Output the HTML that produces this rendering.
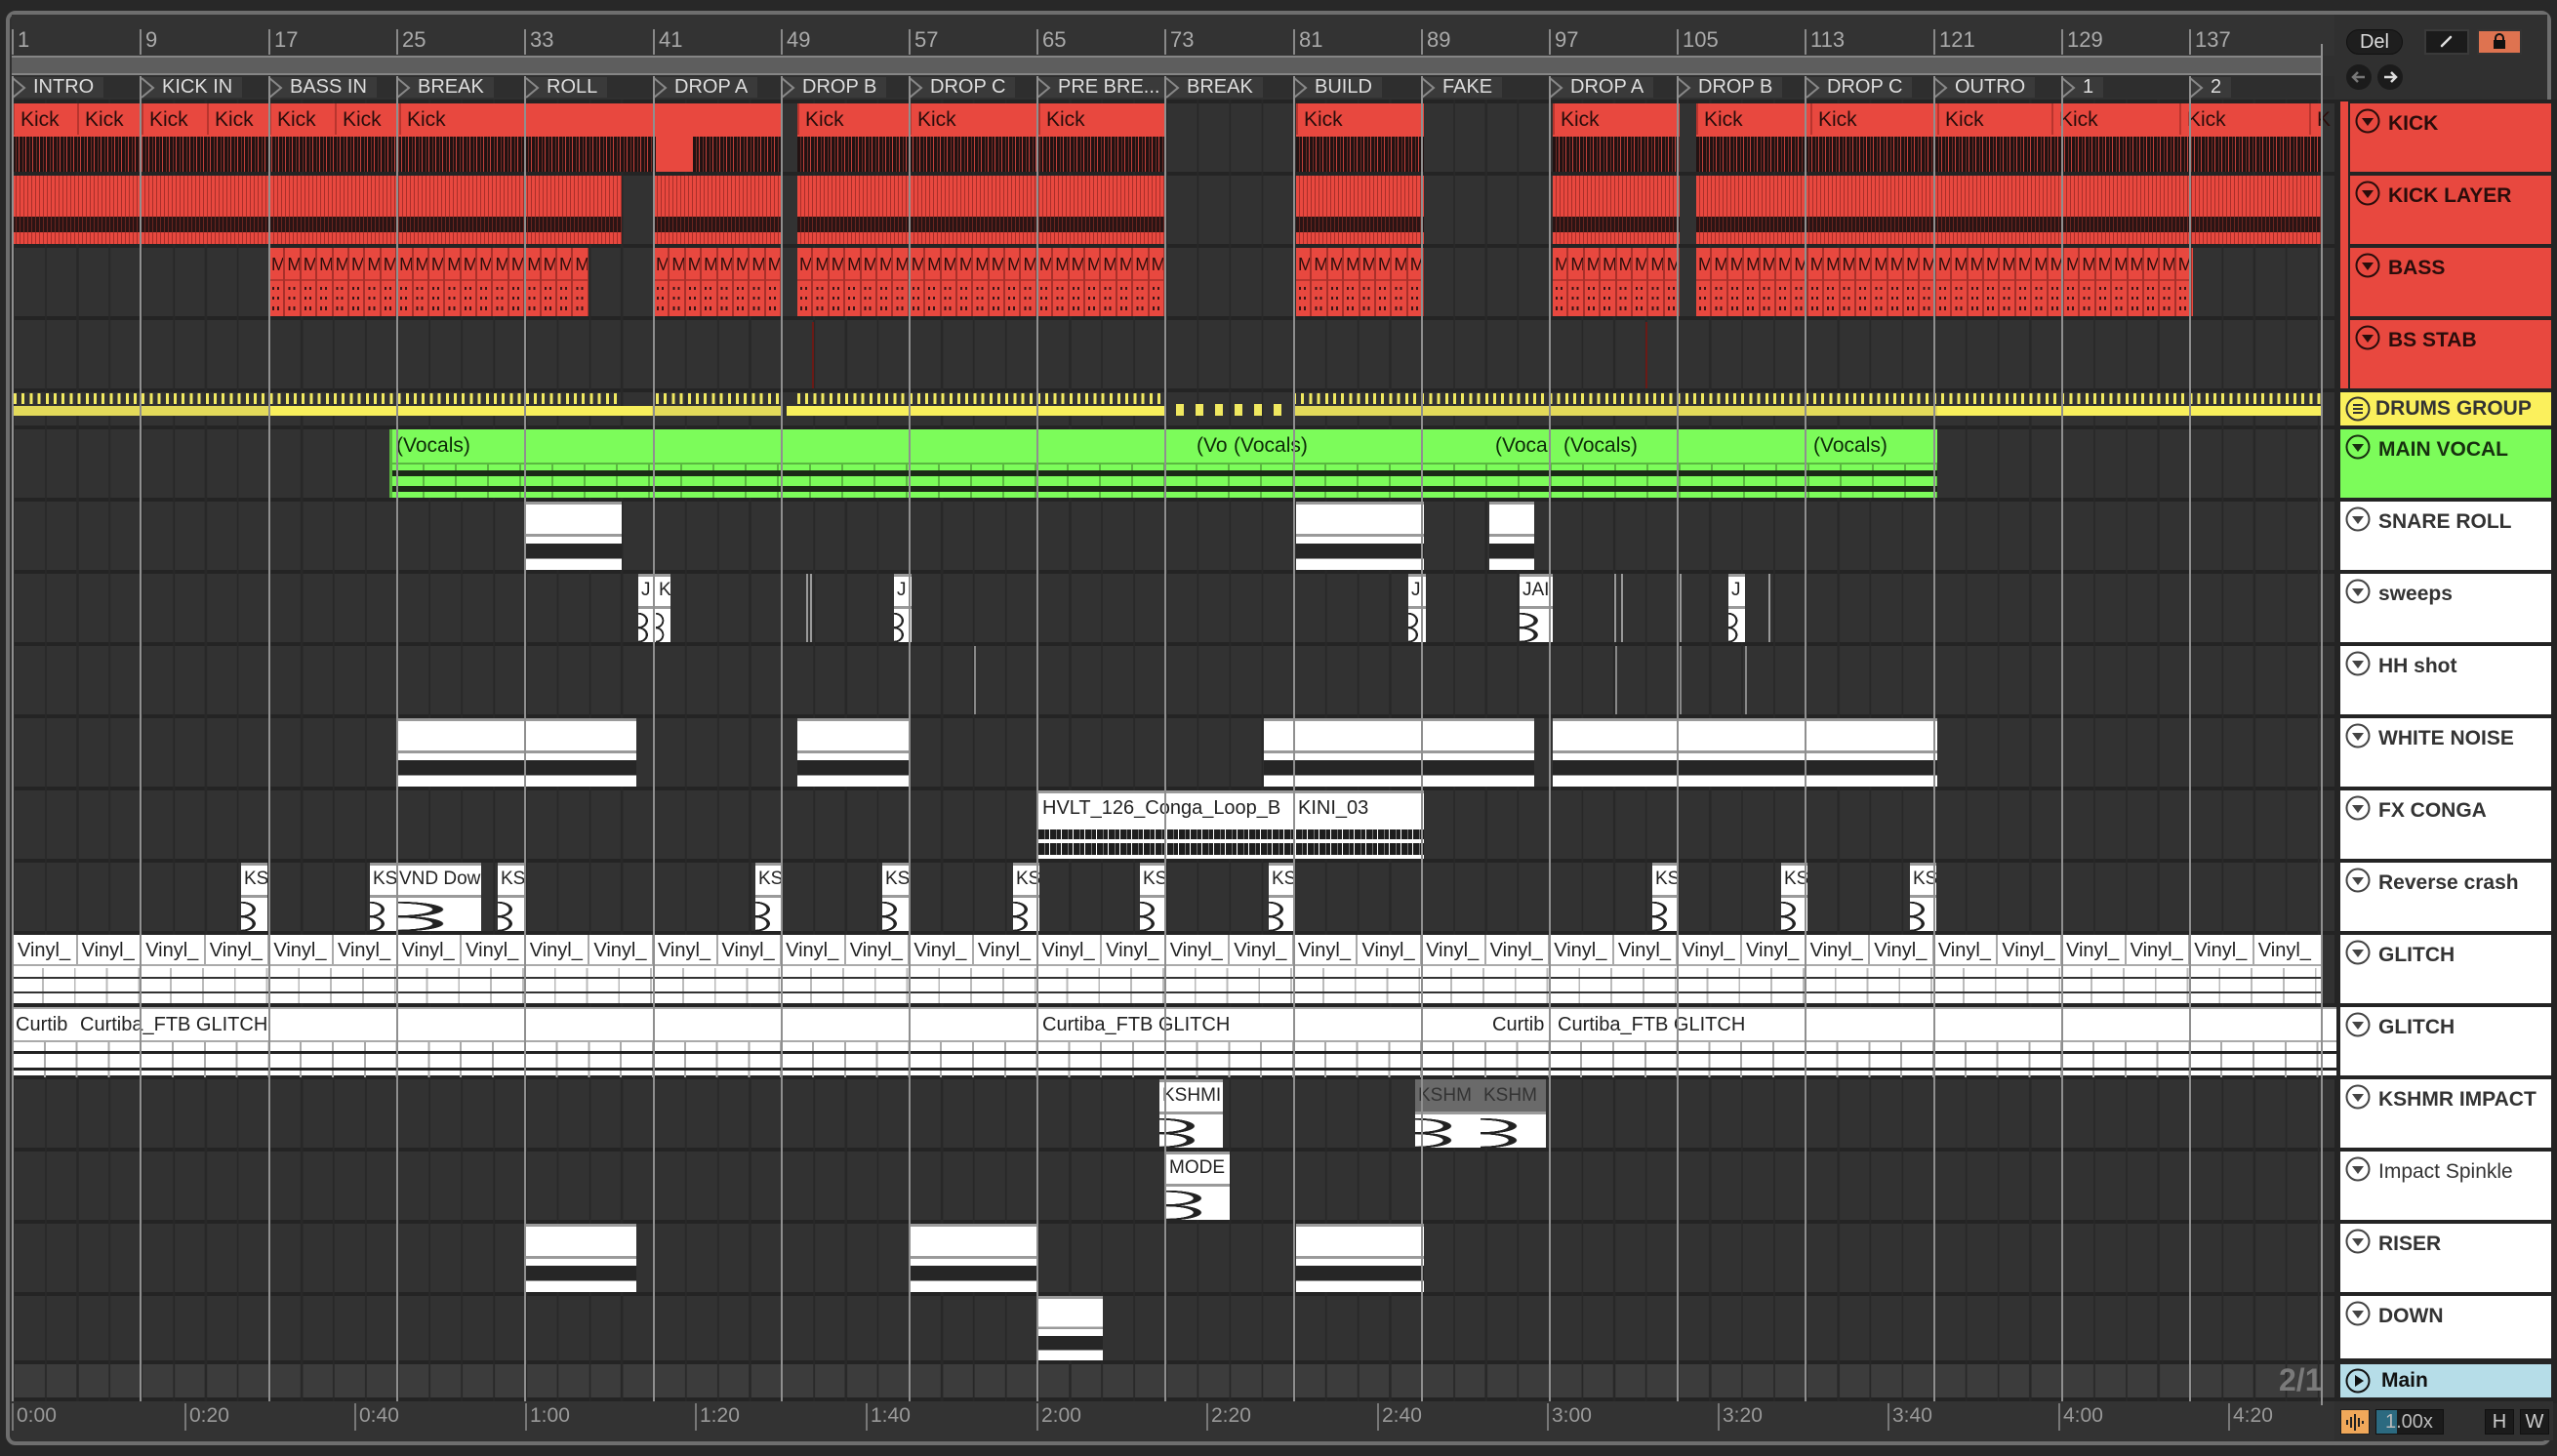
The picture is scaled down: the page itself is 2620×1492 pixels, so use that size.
<!DOCTYPE html>
<html><head><meta charset="utf-8"><style>
*{margin:0;padding:0;box-sizing:border-box}
body{width:2620px;height:1492px;background:#282828;position:relative;overflow:hidden;font-family:"Liberation Sans Narrow","Liberation Sans",sans-serif}
.a{position:absolute}
.frame{left:6px;top:11px;width:2608px;height:1470px;border:4px solid #6e6e6e;border-radius:10px;background:#303030}
.rul{left:12px;top:15px;width:2380px;height:42px;background:#333}
.num{position:absolute;top:30px;font-size:22px;color:#aaa;border-left:2px solid #888;padding-left:4px;line-height:22px;height:26px}
.loop{left:12px;top:57px;width:2367px;height:20px;background:#5e5e5e;border-top:2px solid #858585;border-bottom:2px solid #858585}
.locrow{left:12px;top:78px;width:2380px;height:22px;background:#2e2e2e}
.loc{position:absolute;top:79px;height:21px;background:#3a3a3a;color:#ddd;font-size:20px;line-height:21px;padding-left:22px;padding-right:10px;white-space:nowrap}
.loc svg{position:absolute;left:-1px;top:0}
.tracks{left:12px;top:102px;width:2386px;height:1334px;background:#242424}
.row{position:absolute;left:12px;width:2380px;background:#323232}
.grid{position:absolute;left:12px;top:102px;width:2380px;height:1334px;background:repeating-linear-gradient(90deg,#282828 0 2px,transparent 2px 32.8px);background-position:1px 0}
.vl{position:absolute;top:78px;height:1358px;width:2px;background:#8f8f8f;z-index:5}
.kick{position:absolute;top:106px;height:70px;background:#e8483f}
.kh{position:absolute;top:0;height:32px;font-size:21px;color:#2a0d0b;line-height:34px;padding-left:6px;border-left:2px solid #b8352e}
.kw{position:absolute;left:0;right:0;top:34px;height:36px;background:repeating-linear-gradient(90deg,#221212 0 3px,#6d2a25 3px 4px,#221212 4px 6px,#c2403a 6px 7px)}
.kl{position:absolute;top:180px;height:70px;background:repeating-linear-gradient(90deg,#e8483f 0 3px,#a92f29 3px 4px)}
.kl:after{content:"";position:absolute;left:0;right:0;top:42px;height:16px;background:repeating-linear-gradient(90deg,#2b1414 0 3px,#6a2520 3px 4px)}
.bass{position:absolute;top:254px;height:70px;background:#e8483f;overflow:hidden}
.bass .m{position:absolute;top:0;left:0;height:70px;font-size:18px;color:#2a0d0b;line-height:34px;white-space:nowrap;display:flex}
.bass .m span{display:block;flex:none;width:16.4px;height:70px;border-right:2px solid #a8302a;overflow:hidden;padding-left:2px;background:linear-gradient(transparent 0 32px,#b8352e 32px 34px,transparent 34px)}
.bass .p{position:absolute;left:0;right:0;top:40px;height:28px;background:linear-gradient(#3a1616 0 3px,transparent 3px 10px,#3a1616 10px 13px,transparent 13px 20px,#3a1616 20px 24px,transparent 24px);-webkit-mask:repeating-linear-gradient(90deg,transparent 0 3px,#000 3px 5px,transparent 5px 8px,#000 8px 10px,transparent 10px 16.4px);mask:repeating-linear-gradient(90deg,transparent 0 3px,#000 3px 5px,transparent 5px 8px,#000 8px 10px,transparent 10px 16.4px)}
.tk{position:absolute;top:403px;height:11px;background:repeating-linear-gradient(90deg,#f0e860 0 3px,transparent 3px 8.2px)}
.yb{position:absolute;top:416px;height:10px}
.green{position:absolute;top:440px;height:70px;left:399px;width:1586px;background:#7cfc5a;border-left:3px solid #5ab840}
.gh{position:absolute;top:0;height:32px;font-size:21px;line-height:34px;padding-left:4px;color:#0d2a08;white-space:nowrap}
.gw{position:absolute;left:0;right:0;top:34px;height:36px;border-top:2px solid #5ab840;background:linear-gradient(transparent 0 6px,#1b2a16 6px 12px,transparent 12px 22px,#1b2a16 22px 28px,transparent 28px),repeating-linear-gradient(90deg,transparent 0 31px,#5ab840 31px 33px)}
.wc{position:absolute;border-top:3px solid #9a9a9a;background:linear-gradient(#fff 0 45%,#9a9a9a 45% 49%,#fff 49% 60%,#262626 60% 83%,#fff 83%)}
.sm{position:absolute;border-top:3px solid #9a9a9a;background:#fff;font-size:19px;line-height:28px;padding-left:3px;color:#222;overflow:hidden;white-space:nowrap}
.sm:after{content:"";position:absolute;left:0;right:0;top:30px;bottom:0;border-top:3px solid #9a9a9a;background:radial-gradient(ellipse 70% 30% at 0 35%,transparent 60%,#222 62% 78%,transparent 80%),radial-gradient(ellipse 70% 30% at 0 78%,transparent 60%,#222 62% 78%,transparent 80%),#fff}
.vin{position:absolute;left:12px;top:958px;width:2367px;height:70px;background:#fff}
.vin .h{display:flex;height:32px;border-bottom:2px solid #aaa}
.vin .h span{width:65.6px;flex:none;font-size:20px;line-height:32px;padding-left:4px;color:#222;border-left:2px solid #aaa;overflow:hidden;white-space:nowrap}
.vin .w{position:absolute;left:0;right:0;top:34px;height:36px;background:linear-gradient(transparent 0 9px,#333 9px 11px,transparent 11px 24px,#333 24px 26px,transparent 26px),repeating-linear-gradient(90deg,transparent 0 31px,#bbb 31px 32.8px)}
.gl{position:absolute;left:12px;top:1032px;width:2383px;height:70px;background:#fff;border-top:2px solid #aaa}
.gl span{position:absolute;top:0;font-size:20px;line-height:32px;color:#222;white-space:nowrap}
.gl .w{position:absolute;left:0;right:0;top:32px;height:38px;border-top:2px solid #aaa;background:linear-gradient(transparent 0 9px,#222 9px 12px,transparent 12px 26px,#222 26px 29px,transparent 29px),repeating-linear-gradient(90deg,#aaa 0 2px,transparent 2px 32.8px)}
.hd{position:absolute;left:2398px;width:216px;background:#fff;font-family:"Liberation Sans",sans-serif;font-weight:bold;font-size:21px;color:#333;line-height:24px}
.hd svg{position:absolute;left:5px;top:5px}
.hd b{position:absolute;left:39px;top:9px;white-space:nowrap}
.red{background:#e8483f;color:#2a0d0b}
.tl{position:absolute;top:1438px;font-size:21px;color:#999;border-left:2px solid #777;padding-left:3px;line-height:26px;height:28px}
.btn{position:absolute;font-family:"Liberation Sans",sans-serif}
</style></head><body>
<div class="a frame"></div>
<div class="a rul"></div>
<div class="num" style="left:12px">1</div><div class="num" style="left:143px">9</div><div class="num" style="left:275px">17</div><div class="num" style="left:406px">25</div><div class="num" style="left:537px">33</div><div class="num" style="left:669px">41</div><div class="num" style="left:800px">49</div><div class="num" style="left:931px">57</div><div class="num" style="left:1062px">65</div><div class="num" style="left:1193px">73</div><div class="num" style="left:1325px">81</div><div class="num" style="left:1456px">89</div><div class="num" style="left:1587px">97</div><div class="num" style="left:1718px">105</div><div class="num" style="left:1849px">113</div><div class="num" style="left:1981px">121</div><div class="num" style="left:2112px">129</div><div class="num" style="left:2243px">137</div>
<div class="a loop"></div>
<div class="a locrow"></div>
<div class="loc" style="left:12px">INTRO<svg width="20" height="22"><polyline points="2,1 14,11 2,21" fill="none" stroke="#888" stroke-width="2"/></svg></div>
<div class="loc" style="left:144px">KICK IN<svg width="20" height="22"><polyline points="2,1 14,11 2,21" fill="none" stroke="#888" stroke-width="2"/></svg></div>
<div class="loc" style="left:275px">BASS IN<svg width="20" height="22"><polyline points="2,1 14,11 2,21" fill="none" stroke="#888" stroke-width="2"/></svg></div>
<div class="loc" style="left:406px">BREAK<svg width="20" height="22"><polyline points="2,1 14,11 2,21" fill="none" stroke="#888" stroke-width="2"/></svg></div>
<div class="loc" style="left:538px">ROLL<svg width="20" height="22"><polyline points="2,1 14,11 2,21" fill="none" stroke="#888" stroke-width="2"/></svg></div>
<div class="loc" style="left:669px">DROP A<svg width="20" height="22"><polyline points="2,1 14,11 2,21" fill="none" stroke="#888" stroke-width="2"/></svg></div>
<div class="loc" style="left:800px">DROP B<svg width="20" height="22"><polyline points="2,1 14,11 2,21" fill="none" stroke="#888" stroke-width="2"/></svg></div>
<div class="loc" style="left:931px">DROP C<svg width="20" height="22"><polyline points="2,1 14,11 2,21" fill="none" stroke="#888" stroke-width="2"/></svg></div>
<div class="loc" style="left:1062px;width:131px;overflow:hidden">PRE BRE...<svg width="20" height="22"><polyline points="2,1 14,11 2,21" fill="none" stroke="#888" stroke-width="2"/></svg></div>
<div class="loc" style="left:1194px">BREAK<svg width="20" height="22"><polyline points="2,1 14,11 2,21" fill="none" stroke="#888" stroke-width="2"/></svg></div>
<div class="loc" style="left:1325px">BUILD<svg width="20" height="22"><polyline points="2,1 14,11 2,21" fill="none" stroke="#888" stroke-width="2"/></svg></div>
<div class="loc" style="left:1456px">FAKE<svg width="20" height="22"><polyline points="2,1 14,11 2,21" fill="none" stroke="#888" stroke-width="2"/></svg></div>
<div class="loc" style="left:1587px">DROP A<svg width="20" height="22"><polyline points="2,1 14,11 2,21" fill="none" stroke="#888" stroke-width="2"/></svg></div>
<div class="loc" style="left:1718px">DROP B<svg width="20" height="22"><polyline points="2,1 14,11 2,21" fill="none" stroke="#888" stroke-width="2"/></svg></div>
<div class="loc" style="left:1850px">DROP C<svg width="20" height="22"><polyline points="2,1 14,11 2,21" fill="none" stroke="#888" stroke-width="2"/></svg></div>
<div class="loc" style="left:1981px">OUTRO<svg width="20" height="22"><polyline points="2,1 14,11 2,21" fill="none" stroke="#888" stroke-width="2"/></svg></div>
<div class="loc" style="left:2112px">1<svg width="20" height="22"><polyline points="2,1 14,11 2,21" fill="none" stroke="#888" stroke-width="2"/></svg></div>
<div class="loc" style="left:2243px">2<svg width="20" height="22"><polyline points="2,1 14,11 2,21" fill="none" stroke="#888" stroke-width="2"/></svg></div>

<div class="a tracks"></div>
<div class="row" style="top:106px;height:70px"></div>
<div class="row" style="top:180px;height:70px"></div>
<div class="row" style="top:254px;height:70px"></div>
<div class="row" style="top:328px;height:70px"></div>
<div class="row" style="top:402px;height:34px"></div>
<div class="row" style="top:440px;height:70px"></div>
<div class="row" style="top:514px;height:70px"></div>
<div class="row" style="top:588px;height:70px"></div>
<div class="row" style="top:662px;height:70px"></div>
<div class="row" style="top:736px;height:70px"></div>
<div class="row" style="top:810px;height:70px"></div>
<div class="row" style="top:884px;height:70px"></div>
<div class="row" style="top:958px;height:70px"></div>
<div class="row" style="top:1032px;height:70px"></div>
<div class="row" style="top:1106px;height:70px"></div>
<div class="row" style="top:1180px;height:70px"></div>
<div class="row" style="top:1254px;height:70px"></div>
<div class="row" style="top:1328px;height:66px"></div>
<div class="row" style="top:1398px;height:34px;background:#3c3c3c"></div>
<div class="grid"></div>

<!-- KICK -->
<div class="kick" style="left:13px;width:789px"><div class="kh" style="left:0">Kick</div><div class="kh" style="left:66px">Kick</div><div class="kh" style="left:132px">Kick</div><div class="kh" style="left:199px">Kick</div><div class="kh" style="left:263px">Kick</div><div class="kh" style="left:330px">Kick</div><div class="kh" style="left:396px">Kick</div><div class="kw" style="right:130px"></div><div class="kw" style="left:697px"></div></div>
<div class="kick" style="left:817px;width:378px"><div class="kh">Kick</div><div class="kh" style="left:115px">Kick</div><div class="kh" style="left:247px">Kick</div><div class="kw"></div></div>
<div class="kick" style="left:1328px;width:131px"><div class="kh">Kick</div><div class="kw"></div></div>
<div class="kick" style="left:1591px;width:130px"><div class="kh">Kick</div><div class="kw"></div></div>
<div class="kick" style="left:1738px;width:640px"><div class="kh">Kick</div><div class="kh" style="left:117px">Kick</div><div class="kh" style="left:247px">Kick</div><div class="kh" style="left:364px">Kick</div><div class="kh" style="left:495px">Kick</div><div class="kh" style="left:628px">K</div><div class="kw"></div></div>
<!-- KICK LAYER -->
<div class="kl" style="left:13px;width:624px"></div>
<div class="kl" style="left:670px;width:132px"></div>
<div class="kl" style="left:817px;width:378px"></div>
<div class="kl" style="left:1328px;width:131px"></div>
<div class="kl" style="left:1591px;width:130px"></div>
<div class="kl" style="left:1738px;width:640px"></div>
<!-- BASS -->
<div class="bass" style="left:276px;width:327px"><div class="p"></div><div class="m"><span>M</span><span>M</span><span>M</span><span>M</span><span>M</span><span>M</span><span>M</span><span>M</span><span>M</span><span>M</span><span>M</span><span>M</span><span>M</span><span>M</span><span>M</span><span>M</span><span>M</span><span>M</span><span>M</span><span>M</span></div></div>
<div class="bass" style="left:670px;width:132px"><div class="p"></div><div class="m"><span>M</span><span>M</span><span>M</span><span>M</span><span>M</span><span>M</span><span>M</span><span>M</span></div></div>
<div class="bass" style="left:817px;width:378px"><div class="p"></div><div class="m"><span>M</span><span>M</span><span>M</span><span>M</span><span>M</span><span>M</span><span>M</span><span>M</span><span>M</span><span>M</span><span>M</span><span>M</span><span>M</span><span>M</span><span>M</span><span>M</span><span>M</span><span>M</span><span>M</span><span>M</span><span>M</span><span>M</span><span>M</span></div></div>
<div class="bass" style="left:1328px;width:131px"><div class="p"></div><div class="m"><span>M</span><span>M</span><span>M</span><span>M</span><span>M</span><span>M</span><span>M</span><span>M</span></div></div>
<div class="bass" style="left:1591px;width:130px"><div class="p"></div><div class="m"><span>M</span><span>M</span><span>M</span><span>M</span><span>M</span><span>M</span><span>M</span><span>M</span></div></div>
<div class="bass" style="left:1738px;width:509px"><div class="p"></div><div class="m"><span>M</span><span>M</span><span>M</span><span>M</span><span>M</span><span>M</span><span>M</span><span>M</span><span>M</span><span>M</span><span>M</span><span>M</span><span>M</span><span>M</span><span>M</span><span>M</span><span>M</span><span>M</span><span>M</span><span>M</span><span>M</span><span>M</span><span>M</span><span>M</span><span>M</span><span>M</span><span>M</span><span>M</span><span>M</span><span>M</span><span>M</span></div></div>
<div class="a" style="left:832px;top:330px;width:2px;height:68px;background:#6a1a16"></div>
<div class="a" style="left:1686px;top:330px;width:2px;height:68px;background:#6a1a16"></div>
<!-- DRUMS -->
<div class="tk" style="left:14px;width:620px"></div>
<div class="tk" style="left:672px;width:128px"></div>
<div class="tk" style="left:817px;width:378px"></div>
<div class="tk" style="left:1325px;width:1053px"></div>
<div class="yb" style="left:13px;width:262px;background:#e3da5a"></div>
<div class="yb" style="left:275px;width:393px;background:#f8ef5c"></div>
<div class="yb" style="left:668px;width:132px;background:#e3da5a"></div>
<div class="yb" style="left:806px;width:389px;background:#f8ef5c"></div>
<div class="yb" style="left:1325px;width:660px;background:#e3da5a"></div>
<div class="yb" style="left:1985px;width:393px;background:#f8ef5c"></div>
<div class="a" style="left:1205px;top:414px;width:115px;height:12px;background:repeating-linear-gradient(90deg,#f0e860 0 8px,transparent 8px 20px)"></div>
<!-- GREEN -->
<div class="green"><div class="gh" style="left:0">(Vocals)</div><div class="gh" style="left:820px">(Vo</div><div class="gh" style="left:858px">(Vocals)</div><div class="gh" style="left:1126px">(Vocal</div><div class="gh" style="left:1196px">(Vocals)</div><div class="gh" style="left:1452px">(Vocals)</div><div class="gw"></div></div>
<!-- SNARE -->
<div class="wc" style="left:538px;top:514px;width:99px;height:70px"></div>
<div class="wc" style="left:1328px;top:514px;width:131px;height:70px"></div>
<div class="wc" style="left:1526px;top:514px;width:46px;height:70px"></div>
<!-- sweeps -->
<div class="sm" style="left:654px;top:588px;width:18px;height:70px">J</div>
<div class="sm" style="left:672px;top:588px;width:15px;height:70px">K</div>
<div class="sm" style="left:916px;top:588px;width:18px;height:70px">J</div>
<div class="sm" style="left:1443px;top:588px;width:18px;height:70px">J</div>
<div class="sm" style="left:1557px;top:588px;width:34px;height:70px">JAI</div>
<div class="sm" style="left:1771px;top:588px;width:17px;height:70px">J</div>
<div class="a" style="left:826px;top:588px;width:2px;height:70px;background:#999"></div>
<div class="a" style="left:830px;top:588px;width:2px;height:70px;background:#999"></div>
<div class="a" style="left:1654px;top:588px;width:2px;height:70px;background:#999"></div>
<div class="a" style="left:1661px;top:588px;width:2px;height:70px;background:#999"></div>
<div class="a" style="left:1721px;top:588px;width:2px;height:70px;background:#999"></div>
<div class="a" style="left:1812px;top:588px;width:2px;height:70px;background:#999"></div>
<!-- HH -->
<div class="a" style="left:998px;top:662px;width:2px;height:70px;background:#888"></div>
<div class="a" style="left:1655px;top:662px;width:2px;height:70px;background:#888"></div>
<div class="a" style="left:1721px;top:662px;width:2px;height:70px;background:#888"></div>
<div class="a" style="left:1788px;top:662px;width:2px;height:70px;background:#888"></div>
<!-- WHITE NOISE -->
<div class="wc" style="left:406px;top:736px;width:246px;height:70px"></div>
<div class="wc" style="left:817px;top:736px;width:115px;height:70px"></div>
<div class="wc" style="left:1295px;top:736px;width:277px;height:70px"></div>
<div class="wc" style="left:1591px;top:736px;width:394px;height:70px"></div>
<!-- FX CONGA -->
<div class="a" style="left:1064px;top:810px;width:395px;height:70px;background:#fff;border-top:3px solid #9a9a9a">
<div class="a" style="left:4px;top:0;font-size:20px;line-height:30px;color:#222;white-space:nowrap">HVLT_126_Conga_Loop_B</div>
<div class="a" style="left:264px;top:0;font-size:20px;line-height:30px;color:#222;background:#fff;padding-left:2px">KINI_03</div>
<div class="a" style="left:0;right:0;top:33px;height:34px;background:linear-gradient(#fff 0 4px,transparent 4px 14px,#fff 14px 18px,transparent 18px 30px,#fff 30px),repeating-linear-gradient(90deg,#1e1e1e 0 6px,#777 6px 7px,#1e1e1e 7px 11px,#fff 11px 12px)"></div></div>
<!-- Reverse crash -->
<div class="sm" style="left:247px;top:884px;width:27px;height:70px">KS</div>
<div class="sm" style="left:379px;top:884px;width:27px;height:70px">KS</div>
<div class="sm" style="left:406px;top:884px;width:87px;height:70px">VND Dow</div>
<div class="sm" style="left:510px;top:884px;width:27px;height:70px">KS</div>
<div class="sm" style="left:774px;top:884px;width:27px;height:70px">KS</div>
<div class="sm" style="left:904px;top:884px;width:27px;height:70px">KS</div>
<div class="sm" style="left:1038px;top:884px;width:27px;height:70px">KS</div>
<div class="sm" style="left:1168px;top:884px;width:27px;height:70px">KS</div>
<div class="sm" style="left:1300px;top:884px;width:27px;height:70px">KS</div>
<div class="sm" style="left:1693px;top:884px;width:27px;height:70px">KS</div>
<div class="sm" style="left:1825px;top:884px;width:27px;height:70px">KS</div>
<div class="sm" style="left:1957px;top:884px;width:27px;height:70px">KS</div>
<!-- Vinyl -->
<div class="vin"><div class="h"><span>Vinyl_</span><span>Vinyl_</span><span>Vinyl_</span><span>Vinyl_</span><span>Vinyl_</span><span>Vinyl_</span><span>Vinyl_</span><span>Vinyl_</span><span>Vinyl_</span><span>Vinyl_</span><span>Vinyl_</span><span>Vinyl_</span><span>Vinyl_</span><span>Vinyl_</span><span>Vinyl_</span><span>Vinyl_</span><span>Vinyl_</span><span>Vinyl_</span><span>Vinyl_</span><span>Vinyl_</span><span>Vinyl_</span><span>Vinyl_</span><span>Vinyl_</span><span>Vinyl_</span><span>Vinyl_</span><span>Vinyl_</span><span>Vinyl_</span><span>Vinyl_</span><span>Vinyl_</span><span>Vinyl_</span><span>Vinyl_</span><span>Vinyl_</span><span>Vinyl_</span><span>Vinyl_</span><span>Vinyl_</span><span>Vinyl_</span></div><div class="w"></div></div>
<!-- GLITCH 2 -->
<div class="gl"><span style="left:4px">Curtib</span><span style="left:70px">Curtiba_FTB GLITCH</span><span style="left:1056px">Curtiba_FTB GLITCH</span><span style="left:1517px">Curtib</span><span style="left:1584px">Curtiba_FTB GLITCH</span><div class="w"></div></div>
<!-- KSHMR -->
<div class="sm" style="left:1188px;top:1106px;width:65px;height:70px;font-size:19px">KSHMI</div>
<div class="sm" style="left:1450px;top:1106px;width:67px;height:70px;background:#6a6a6a;border-top-color:#6a6a6a;color:#333">KSHM</div>
<div class="sm" style="left:1517px;top:1106px;width:67px;height:70px;background:#6a6a6a;border-top-color:#6a6a6a;color:#333">KSHM</div>
<div class="sm" style="left:1195px;top:1180px;width:65px;height:70px">MODE</div>
<!-- RISER / DOWN -->
<div class="wc" style="left:538px;top:1254px;width:114px;height:70px"></div>
<div class="wc" style="left:932px;top:1254px;width:132px;height:70px"></div>
<div class="wc" style="left:1328px;top:1254px;width:131px;height:70px"></div>
<div class="wc" style="left:1064px;top:1328px;width:66px;height:66px"></div>
<div class="a" style="left:2335px;top:1396px;font-family:'Liberation Sans',sans-serif;font-weight:bold;font-size:32px;color:#7a7a7a">2/1</div>

<!-- locator lines -->
<div class="vl" style="left:12px"></div><div class="vl" style="left:143px"></div><div class="vl" style="left:275px"></div><div class="vl" style="left:406px"></div><div class="vl" style="left:537px"></div><div class="vl" style="left:669px"></div><div class="vl" style="left:800px"></div><div class="vl" style="left:931px"></div><div class="vl" style="left:1062px"></div><div class="vl" style="left:1193px"></div><div class="vl" style="left:1325px"></div><div class="vl" style="left:1456px"></div><div class="vl" style="left:1587px"></div><div class="vl" style="left:1718px"></div><div class="vl" style="left:1849px"></div><div class="vl" style="left:1981px"></div><div class="vl" style="left:2112px"></div><div class="vl" style="left:2243px"></div><div class="vl" style="left:2378px;top:45px;height:1395px"></div>

<!-- time ruler -->
<div class="a" style="left:12px;top:1436px;width:2380px;height:40px;background:#333"></div>
<div class="tl" style="left:12px">0:00</div><div class="tl" style="left:189px">0:20</div><div class="tl" style="left:363px">0:40</div><div class="tl" style="left:538px">1:00</div><div class="tl" style="left:712px">1:20</div><div class="tl" style="left:887px">1:40</div><div class="tl" style="left:1062px">2:00</div><div class="tl" style="left:1236px">2:20</div><div class="tl" style="left:1411px">2:40</div><div class="tl" style="left:1585px">3:00</div><div class="tl" style="left:1760px">3:20</div><div class="tl" style="left:1934px">3:40</div><div class="tl" style="left:2109px">4:00</div><div class="tl" style="left:2283px">4:20</div>

<!-- right panel -->
<div class="a" style="left:2394px;top:15px;width:216px;height:87px;background:#303030"></div>
<div class="btn" style="left:2404px;top:30px;width:58px;height:26px;border-radius:13px;background:#1e1e1e;border:1px solid #111;color:#ddd;font-size:20px;text-align:center;line-height:25px">Del</div>
<div class="btn" style="left:2484px;top:30px;width:46px;height:26px;background:#1b1b1b;border:2px solid #3a3a3a"><svg width="42" height="22"><line x1="16" y1="15" x2="25" y2="6" stroke="#ddd" stroke-width="2.5" stroke-linecap="round"/></svg></div>
<div class="btn" style="left:2538px;top:30px;width:46px;height:26px;background:#de7350;border:2px solid #333"><svg width="42" height="22"><rect x="15" y="9" width="12" height="9" fill="#111"/><path d="M17 10 V7 a4 4 0 0 1 8 0 V10" fill="none" stroke="#111" stroke-width="2"/></svg></div>
<div class="btn" style="left:2404px;top:66px;width:26px;height:26px;border-radius:13px;background:#1b1b1b"><svg width="26" height="26"><path d="M19 13H8M12 8L7 13L12 18" fill="none" stroke="#777" stroke-width="2.5"/></svg></div>
<div class="btn" style="left:2436px;top:66px;width:26px;height:26px;border-radius:13px;background:#1b1b1b"><svg width="26" height="26"><path d="M7 13H18M14 8L19 13L14 18" fill="none" stroke="#ddd" stroke-width="2.5"/></svg></div>

<div class="a" style="left:2394px;top:102px;width:226px;height:1336px;background:#242424"></div>
<div class="a" style="left:2398px;top:104px;width:8px;height:294px;background:#e8483f"></div>
<div class="hd red" style="top:106px;left:2408px;width:206px;height:70px"><svg width="26" height="26"><circle cx="13" cy="13" r="11.5" fill="none" stroke="#2a0d0b" stroke-width="2"/><path d="M7 10H19L13 18Z" fill="#2a0d0b"/></svg><b>KICK</b></div>
<div class="hd red" style="top:180px;left:2408px;width:206px;height:70px"><svg width="26" height="26"><circle cx="13" cy="13" r="11.5" fill="none" stroke="#2a0d0b" stroke-width="2"/><path d="M7 10H19L13 18Z" fill="#2a0d0b"/></svg><b>KICK LAYER</b></div>
<div class="hd red" style="top:254px;left:2408px;width:206px;height:70px"><svg width="26" height="26"><circle cx="13" cy="13" r="11.5" fill="none" stroke="#2a0d0b" stroke-width="2"/><path d="M7 10H19L13 18Z" fill="#2a0d0b"/></svg><b>BASS</b></div>
<div class="hd red" style="top:328px;left:2408px;width:206px;height:70px"><svg width="26" height="26"><circle cx="13" cy="13" r="11.5" fill="none" stroke="#2a0d0b" stroke-width="2"/><path d="M7 10H19L13 18Z" fill="#2a0d0b"/></svg><b>BS STAB</b></div>
<div class="hd" style="top:402px;height:34px;background:#fbf05c;color:#333"><svg width="26" height="26" style="top:4px"><circle cx="13" cy="13" r="11.5" fill="none" stroke="#333" stroke-width="2"/><path d="M8 9H18M8 13H18M8 17H18" stroke="#333" stroke-width="2"/></svg><b style="left:36px;top:5px">DRUMS GROUP</b></div>
<div class="hd" style="top:440px;height:70px;background:#7cfc5a;color:#17300f"><svg width="26" height="26"><circle cx="13" cy="13" r="11.5" fill="none" stroke="#17300f" stroke-width="2"/><path d="M7 10H19L13 18Z" fill="#17300f"/></svg><b>MAIN VOCAL</b></div>
<div class="hd" style="top:514px;height:70px"><svg width="26" height="26"><circle cx="13" cy="13" r="11.5" fill="none" stroke="#444" stroke-width="2"/><path d="M7 10H19L13 18Z" fill="#444"/></svg><b>SNARE ROLL</b></div>
<div class="hd" style="top:588px;height:70px"><svg width="26" height="26"><circle cx="13" cy="13" r="11.5" fill="none" stroke="#444" stroke-width="2"/><path d="M7 10H19L13 18Z" fill="#444"/></svg><b>sweeps</b></div>
<div class="hd" style="top:662px;height:70px"><svg width="26" height="26"><circle cx="13" cy="13" r="11.5" fill="none" stroke="#444" stroke-width="2"/><path d="M7 10H19L13 18Z" fill="#444"/></svg><b>HH shot</b></div>
<div class="hd" style="top:736px;height:70px"><svg width="26" height="26"><circle cx="13" cy="13" r="11.5" fill="none" stroke="#444" stroke-width="2"/><path d="M7 10H19L13 18Z" fill="#444"/></svg><b>WHITE NOISE</b></div>
<div class="hd" style="top:810px;height:70px"><svg width="26" height="26"><circle cx="13" cy="13" r="11.5" fill="none" stroke="#444" stroke-width="2"/><path d="M7 10H19L13 18Z" fill="#444"/></svg><b>FX CONGA</b></div>
<div class="hd" style="top:884px;height:70px"><svg width="26" height="26"><circle cx="13" cy="13" r="11.5" fill="none" stroke="#444" stroke-width="2"/><path d="M7 10H19L13 18Z" fill="#444"/></svg><b>Reverse crash</b></div>
<div class="hd" style="top:958px;height:70px"><svg width="26" height="26"><circle cx="13" cy="13" r="11.5" fill="none" stroke="#444" stroke-width="2"/><path d="M7 10H19L13 18Z" fill="#444"/></svg><b>GLITCH</b></div>
<div class="hd" style="top:1032px;height:70px"><svg width="26" height="26"><circle cx="13" cy="13" r="11.5" fill="none" stroke="#444" stroke-width="2"/><path d="M7 10H19L13 18Z" fill="#444"/></svg><b>GLITCH</b></div>
<div class="hd" style="top:1106px;height:70px"><svg width="26" height="26"><circle cx="13" cy="13" r="11.5" fill="none" stroke="#444" stroke-width="2"/><path d="M7 10H19L13 18Z" fill="#444"/></svg><b>KSHMR IMPACT</b></div>
<div class="hd" style="top:1180px;height:70px"><svg width="26" height="26"><circle cx="13" cy="13" r="11.5" fill="none" stroke="#444" stroke-width="2"/><path d="M7 10H19L13 18Z" fill="#444"/></svg><b style="font-weight:normal">Impact Spinkle</b></div>
<div class="hd" style="top:1254px;height:70px"><svg width="26" height="26"><circle cx="13" cy="13" r="11.5" fill="none" stroke="#444" stroke-width="2"/><path d="M7 10H19L13 18Z" fill="#444"/></svg><b>RISER</b></div>
<div class="hd" style="top:1328px;height:64px"><svg width="26" height="26"><circle cx="13" cy="13" r="11.5" fill="none" stroke="#444" stroke-width="2"/><path d="M7 10H19L13 18Z" fill="#444"/></svg><b>DOWN</b></div>
<div class="hd" style="top:1398px;height:34px;background:#b6dde8;color:#111"><svg width="26" height="26" style="top:4px"><circle cx="13" cy="13" r="11.5" fill="none" stroke="#111" stroke-width="2"/><path d="M10 7V19L19 13Z" fill="#111"/></svg><b style="left:42px;top:5px">Main</b></div>
<div class="a" style="left:2394px;top:1436px;width:222px;height:40px;background:#303030"></div>
<div class="btn" style="left:2398px;top:1444px;width:30px;height:26px;background:#f0a85a;border:1px solid #222"><svg width="28" height="24"><path d="M6 10v5M10 7v11M14 4v17M18 8v9M22 11v3" stroke="#222" stroke-width="2"/></svg></div>
<div class="btn" style="left:2434px;top:1444px;width:70px;height:26px;background:#1b1b1b;border:1px solid #111;color:#bbb;font-size:20px;line-height:25px"><span class="a" style="left:0;top:0;width:21px;height:24px;background:#2c6a80"></span><span class="a" style="left:9px;top:0">1.00x</span></div>
<div class="btn" style="left:2546px;top:1444px;width:30px;height:26px;background:#1b1b1b;border:1px solid #111;color:#ccc;font-size:20px;text-align:center;line-height:25px">H</div>
<div class="btn" style="left:2582px;top:1444px;width:30px;height:26px;background:#1b1b1b;border:1px solid #111;color:#ccc;font-size:20px;text-align:center;line-height:25px">W</div>
<div class="a" style="left:0;top:1482px;width:2620px;height:10px;background:#282828"></div>
</body></html>
